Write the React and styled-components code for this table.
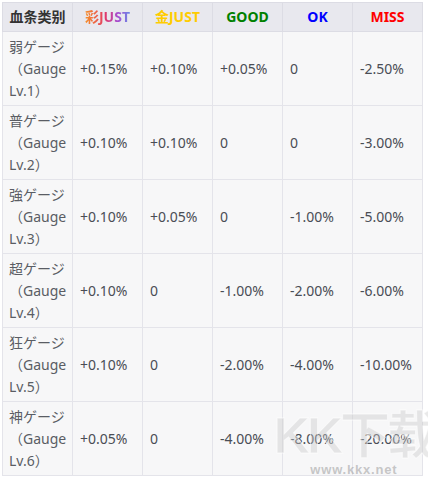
import React from 'react';
import styled, { createGlobalStyle } from 'styled-components';

const GlobalStyle = createGlobalStyle`
  body {
    margin: 0;
    background: #fff;
    font-family: "Noto Sans", "Noto Sans CJK SC", sans-serif;
  }
`;

const Page = styled.div`
  position: relative;
  padding: 2px;
  width: 428px;
  height: 479px;
  box-sizing: border-box;
  overflow: hidden;
`;

const Table = styled.table`
  width: 421px;
  table-layout: fixed;
  border-collapse: collapse;
  font-size: 14px;
  line-height: 22px;
  color: #4a4d55;
`;

const Head = styled.th`
  background: #e8e8ee;
  border: 1px solid #dcdce4;
  padding: 3px 4px 3px;
  font-weight: 700;
  text-align: center;
  white-space: nowrap;
  color: ${p => p.$color || '#333'};
`;

const Rainbow = styled.span`
  background: linear-gradient(90deg, #f5922b 0%, #ef6a3f 20%, #e23a6a 45%, #a84ccf 72%, #6a86e6 100%);
  -webkit-background-clip: text;
  background-clip: text;
  color: transparent;
`;

const Gold = styled.span`
  color: #ffcc00;
`;

const Cell = styled.td`
  background: #f7f7f8;
  border: 1px solid #e4e4ea;
  padding: 4px ${p => (p.$label ? '4px' : '7px')} 3px ${p => (p.$label ? '6px' : '7px')};
  vertical-align: middle;
  text-align: left;
  white-space: nowrap;
  overflow: visible;
  color: ${p => (p.$label ? '#5a5d64' : '#4a4d55')};
`;

const Mark = styled.div`
  position: absolute;
  right: -6px;
  bottom: 2px;
  display: flex;
  flex-direction: column;
  align-items: center;
  pointer-events: none;
`;

const MarkLogo = styled.div`
  font-family: "Liberation Sans", "Noto Sans CJK SC", sans-serif;
  font-size: 50px;
  font-weight: 700;
  line-height: 52px;
  letter-spacing: -3px;
  color: rgba(200, 200, 200, 0.4);
  -webkit-text-stroke: 1px rgba(255, 255, 255, 0.6);
`;

const MarkUrl = styled.div`
  font-family: "Liberation Sans", sans-serif;
  font-size: 13px;
  font-weight: 700;
  letter-spacing: 0.8px;
  color: rgba(170, 170, 170, 0.65);
  margin-top: 0;
`;

const rows = [
  ['弱', 'Lv.1', '+0.15%', '+0.10%', '+0.05%', '0', '-2.50%'],
  ['普', 'Lv.2', '+0.10%', '+0.10%', '0', '0', '-3.00%'],
  ['強', 'Lv.3', '+0.10%', '+0.05%', '0', '-1.00%', '-5.00%'],
  ['超', 'Lv.4', '+0.10%', '0', '-1.00%', '-2.00%', '-6.00%'],
  ['狂', 'Lv.5', '+0.10%', '0', '-2.00%', '-4.00%', '-10.00%'],
  ['神', 'Lv.6', '+0.05%', '0', '-4.00%', '-8.00%', '-20.00%'],
];

export default function App() {
  return (
    <Page>
      <GlobalStyle />
      <Table>
        <thead>
          <tr>
            <Head>血条类别</Head>
            <Head><Rainbow>彩JUST</Rainbow></Head>
            <Head><Gold>金JUST</Gold></Head>
            <Head $color="#008000">GOOD</Head>
            <Head $color="#0000ff">OK</Head>
            <Head $color="#ff0000">MISS</Head>
          </tr>
        </thead>
        <tbody>
          {rows.map(([kanji, lv, ...vals]) => (
            <tr key={lv}>
              <Cell $label>
                {kanji}ゲージ<br />（Gauge<br />{lv}）
              </Cell>
              {vals.map((v, i) => (
                <Cell key={i}>{v}</Cell>
              ))}
            </tr>
          ))}
        </tbody>
      </Table>
      <Mark>
        <MarkLogo>KK下载</MarkLogo>
        <MarkUrl>www.kkx.net</MarkUrl>
      </Mark>
    </Page>
  );
}
